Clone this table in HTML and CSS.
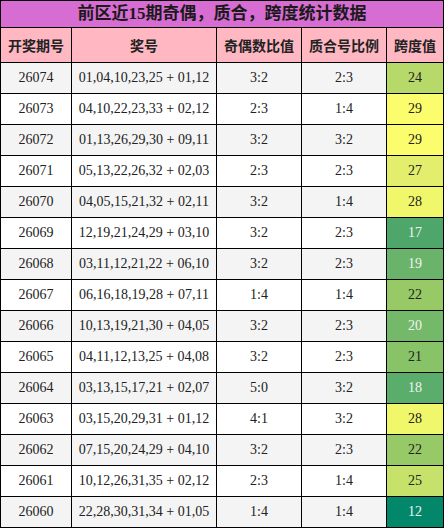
FILE: index.html
```html
<!DOCTYPE html>
<html lang="zh-CN">
<head>
    <meta charset="UTF-8">
    <meta name="viewport" content="width=device-width, initial-scale=1.0">
    <title>前区近15期奇偶，质合，跨度统计数据</title>
    <link rel="stylesheet" href="styles.css">
</head>
<body>

<table class="stats">
    <colgroup>
        <col class="col-issue">
        <col class="col-nums">
        <col class="col-odd">
        <col class="col-prime">
        <col class="col-span">
    </colgroup>
    <thead>
        <tr class="title-row">
            <th colspan="5">前区近15期奇偶，质合，跨度统计数据</th>
        </tr>
        <tr class="head-row">
            <th>开奖期号</th>
            <th>奖号</th>
            <th>奇偶数比值</th>
            <th>质合号比例</th>
            <th>跨度值</th>
        </tr>
    </thead>
    <tbody>
        <tr><td>26074</td><td>01,04,10,23,25 + 01,12</td><td>3:2</td><td>2:3</td><td class="span s24">24</td></tr>
        <tr><td>26073</td><td>04,10,22,23,33 + 02,12</td><td>2:3</td><td>1:4</td><td class="span s29">29</td></tr>
        <tr><td>26072</td><td>01,13,26,29,30 + 09,11</td><td>3:2</td><td>3:2</td><td class="span s29">29</td></tr>
        <tr><td>26071</td><td>05,13,22,26,32 + 02,03</td><td>2:3</td><td>2:3</td><td class="span s27">27</td></tr>
        <tr><td>26070</td><td>04,05,15,21,32 + 02,11</td><td>3:2</td><td>1:4</td><td class="span s28">28</td></tr>
        <tr><td>26069</td><td>12,19,21,24,29 + 03,10</td><td>3:2</td><td>2:3</td><td class="span s17 light">17</td></tr>
        <tr><td>26068</td><td>03,11,12,21,22 + 06,10</td><td>3:2</td><td>2:3</td><td class="span s19 light">19</td></tr>
        <tr><td>26067</td><td>06,16,18,19,28 + 07,11</td><td>1:4</td><td>1:4</td><td class="span s22">22</td></tr>
        <tr><td>26066</td><td>10,13,19,21,30 + 04,05</td><td>3:2</td><td>2:3</td><td class="span s20 light">20</td></tr>
        <tr><td>26065</td><td>04,11,12,13,25 + 04,08</td><td>3:2</td><td>2:3</td><td class="span s21">21</td></tr>
        <tr><td>26064</td><td>03,13,15,17,21 + 02,07</td><td>5:0</td><td>3:2</td><td class="span s18 light">18</td></tr>
        <tr><td>26063</td><td>03,15,20,29,31 + 01,12</td><td>4:1</td><td>3:2</td><td class="span s28">28</td></tr>
        <tr><td>26062</td><td>07,15,20,24,29 + 04,10</td><td>3:2</td><td>2:3</td><td class="span s22">22</td></tr>
        <tr><td>26061</td><td>10,12,26,31,35 + 02,12</td><td>2:3</td><td>1:4</td><td class="span s25">25</td></tr>
        <tr><td>26060</td><td>22,28,30,31,34 + 01,05</td><td>1:4</td><td>1:4</td><td class="span s12 light">12</td></tr>
    </tbody>
</table>

</body>
</html>
```

FILE: styles.css
```css
body {
    margin: 0;
    background-color: #fff;
    font-family: "Liberation Serif", "Noto Sans CJK SC", serif;
    color: #222;
}
.stats {
    width: 443px;
    border-collapse: collapse;
    table-layout: fixed;
}
.col-issue { width: 71px; }
.col-nums { width: 145px; }
.col-odd { width: 85px; }
.col-prime { width: 85px; }
.col-span { width: 57px; }
.stats th,
.stats td {
    border: 1px solid #000;
    padding: 0;
    text-align: center;
    white-space: nowrap;
    overflow: hidden;
}
.title-row th {
    height: 26px;
    background-color: #d76cd2;
    font-size: 17px;
    line-height: 26px;
    font-weight: bold;
    color: #1a1a1a;
}
.head-row th {
    height: 34px;
    background-color: #ffb7c2;
    font-family: "Noto Sans CJK SC", sans-serif;
    font-size: 14px;
    line-height: 34px;
    font-weight: bold;
    color: #222;
}
.stats td {
    height: 30px;
    font-size: 14px;
    line-height: 30px;
}
.stats tbody tr:nth-child(odd) {
    background-color: #f4f4f4;
}
.stats tbody tr:nth-child(even) {
    background-color: #fff;
}
.span.light { color: #f2f2f2; }
.s12 { background-color: #03876a; }
.s17 { background-color: #4ea66a; }
.s18 { background-color: #5aad6a; }
.s19 { background-color: #69b46a; }
.s20 { background-color: #74b96a; }
.s21 { background-color: #88c368; }
.s22 { background-color: #97ca66; }
.s24 { background-color: #b6d96a; }
.s25 { background-color: #c7e26a; }
.s27 { background-color: #e3ef6c; }
.s28 { background-color: #f1f76b; }
.s29 { background-color: #fcfd6c; }
```
